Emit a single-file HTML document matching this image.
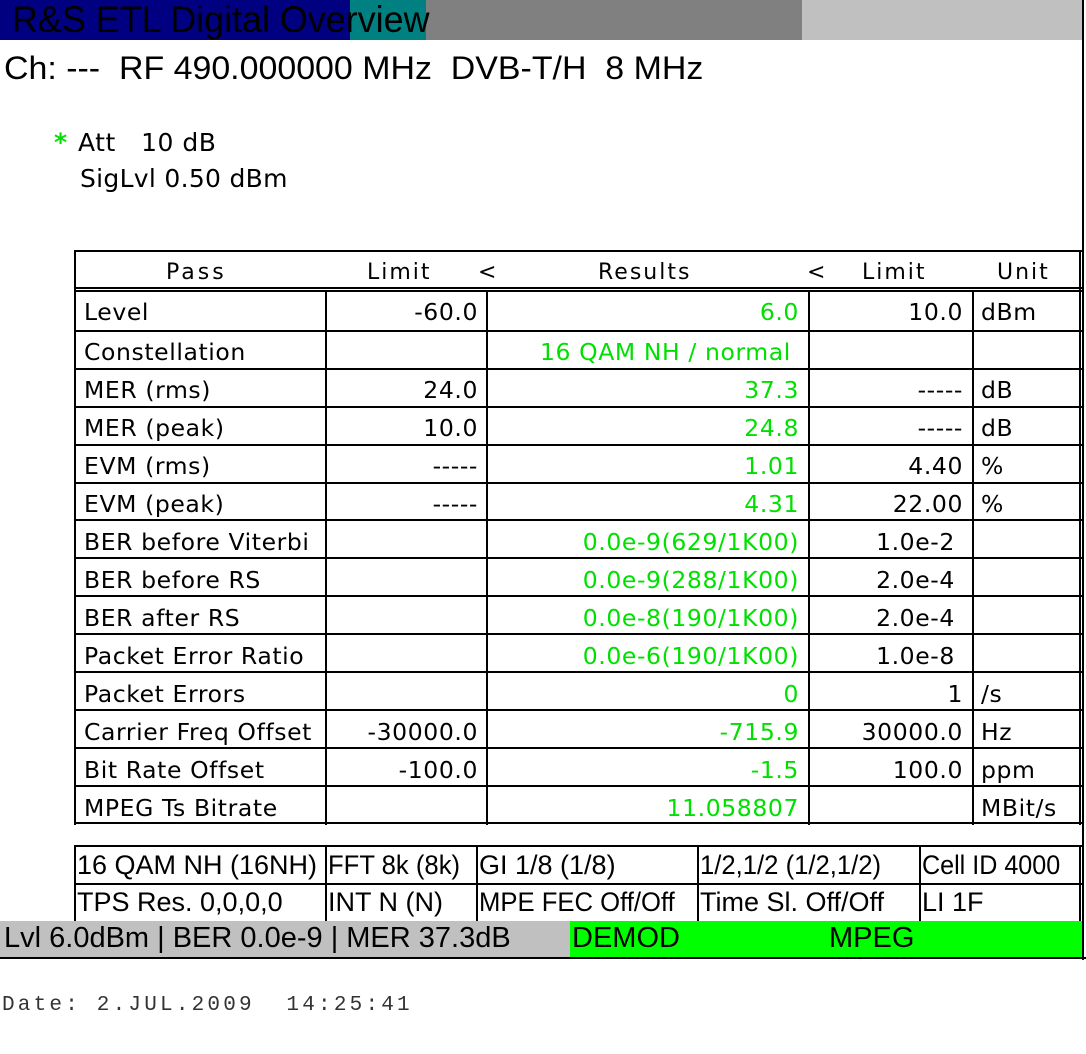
<!DOCTYPE html>
<html><head><meta charset="utf-8"><style>
*{margin:0;padding:0;box-sizing:border-box}
body{width:1086px;height:1054px;background:#fff;position:relative;overflow:hidden;font-family:"DejaVu Sans","Liberation Sans",sans-serif;color:#000}
.a{position:absolute;white-space:nowrap}
.hl{position:absolute;height:2px;background:#000}
.vl{position:absolute;width:2px;background:#000}
.t{position:absolute;font-size:23.5px;line-height:40px;white-space:nowrap;letter-spacing:0.6px}
.h{position:absolute;font-size:22px;line-height:38px;white-space:nowrap}
.r{text-align:right}
.g{color:#00e000}
.b{position:absolute;font-size:27px;line-height:37px;white-space:nowrap;font-family:"Liberation Sans",sans-serif;transform-origin:left center}
</style></head><body>
<div class="a" style="left:0;top:0;width:350px;height:40px;background:#000080"></div>
<div class="a" style="left:350px;top:0;width:76px;height:40px;background:#008080"></div>
<div class="a" style="left:426px;top:0;width:376px;height:40px;background:#808080"></div>
<div class="a" style="left:802px;top:0;width:280px;height:40px;background:#c0c0c0"></div>
<div class="vl" style="left:1082px;top:0;height:960px"></div>
<div class="a" style="left:12px;top:-1px;font-family:'Liberation Sans',sans-serif;font-size:37px;line-height:42px;transform:scaleX(0.97);transform-origin:left">R&amp;S ETL Digital Overview</div>
<div class="a" style="left:4px;top:48px;font-family:'Liberation Sans',sans-serif;font-size:32px;line-height:40px;transform:scaleX(1.06);transform-origin:left">Ch: ---&nbsp; RF 490.000000 MHz&nbsp; DVB-T/H&nbsp; 8 MHz</div>
<div class="a g" style="left:54px;top:126px;font-size:25px;line-height:34px;font-weight:bold">*</div>
<div class="a" style="left:78px;top:126px;font-size:25px;line-height:34px;letter-spacing:0.5px">Att&nbsp;&nbsp; 10 dB</div>
<div class="a" style="left:80px;top:162px;font-size:25px;line-height:34px;letter-spacing:0.3px">SigLvl 0.50 dBm</div>

<div class="hl" style="left:74px;top:250px;width:1008px"></div>
<div class="hl" style="left:74px;top:287px;width:1008px"></div>
<div class="hl" style="left:74px;top:290px;width:1008px"></div>
<div class="vl" style="left:74px;top:250px;height:575px"></div>
<div class="vl" style="left:1079px;top:250px;height:575px"></div>
<div class="vl" style="left:325px;top:290px;height:535px"></div>
<div class="vl" style="left:486px;top:290px;height:535px"></div>
<div class="vl" style="left:808px;top:290px;height:535px"></div>
<div class="vl" style="left:972px;top:290px;height:535px"></div>
<div class="hl" style="left:74px;top:330px;width:1008px"></div>
<div class="hl" style="left:74px;top:368px;width:1008px"></div>
<div class="hl" style="left:74px;top:406px;width:1008px"></div>
<div class="hl" style="left:74px;top:444px;width:1008px"></div>
<div class="hl" style="left:74px;top:482px;width:1008px"></div>
<div class="hl" style="left:74px;top:519px;width:1008px"></div>
<div class="hl" style="left:74px;top:557px;width:1008px"></div>
<div class="hl" style="left:74px;top:595px;width:1008px"></div>
<div class="hl" style="left:74px;top:633px;width:1008px"></div>
<div class="hl" style="left:74px;top:671px;width:1008px"></div>
<div class="hl" style="left:74px;top:709px;width:1008px"></div>
<div class="hl" style="left:74px;top:747px;width:1008px"></div>
<div class="hl" style="left:74px;top:785px;width:1008px"></div>
<div class="hl" style="left:74px;top:822px;width:1008px"></div>

<div class="h" style="left:166px;top:254px;letter-spacing:3px">Pass</div>
<div class="h" style="left:367px;top:254px;letter-spacing:2px">Limit</div>
<div class="h" style="left:478px;top:254px">&lt;</div>
<div class="h" style="left:598px;top:254px;letter-spacing:2px">Results</div>
<div class="h" style="left:807px;top:254px">&lt;</div>
<div class="h" style="left:862px;top:254px;letter-spacing:2px">Limit</div>
<div class="h" style="left:997px;top:254px;letter-spacing:2px">Unit</div>

<div id="rows"></div>
<script>
var rows=[
["Level","-60.0","6.0","10.0","dBm",292],
["Constellation","","16 QAM NH / normal ","","",332],
["MER (rms)","24.0","37.3","-----","dB",370],
["MER (peak)","10.0","24.8","-----","dB",408],
["EVM (rms)","-----","1.01","4.40","%",446],
["EVM (peak)","-----","4.31","22.00","%",484],
["BER before Viterbi","","0.0e-9(629/1K00)","1.0e-2 ","",522],
["BER before RS","","0.0e-9(288/1K00)","2.0e-4 ","",560],
["BER after RS","","0.0e-8(190/1K00)","2.0e-4 ","",598],
["Packet Error Ratio","","0.0e-6(190/1K00)","1.0e-8 ","",636],
["Packet Errors","","0","1","/s",674],
["Carrier Freq Offset","-30000.0","-715.9","30000.0","Hz",712],
["Bit Rate Offset","-100.0","-1.5","100.0","ppm",750],
["MPEG Ts Bitrate","","11.058807","","MBit/s",788]];
var h="";
rows.forEach(function(r){var y=r[5];
h+='<div class="t" style="left:84px;top:'+y+'px">'+r[0]+'</div>';
h+='<div class="t r" style="left:326px;width:152px;top:'+y+'px">'+r[1]+'</div>';
h+='<div class="t r g" style="left:488px;width:311px;top:'+y+'px;white-space:pre">'+r[2]+'</div>';
h+='<div class="t r" style="left:810px;width:153px;top:'+y+'px;white-space:pre">'+r[3]+'</div>';
h+='<div class="t" style="left:981px;top:'+y+'px">'+r[4]+'</div>';});
document.getElementById("rows").outerHTML=h;
</script>

<div class="hl" style="left:74px;top:845px;width:1008px"></div>
<div class="hl" style="left:74px;top:883px;width:1008px"></div>
<div class="vl" style="left:74px;top:845px;height:76px"></div>
<div class="vl" style="left:325px;top:845px;height:76px"></div>
<div class="vl" style="left:476px;top:845px;height:76px"></div>
<div class="vl" style="left:697px;top:845px;height:76px"></div>
<div class="vl" style="left:919px;top:845px;height:76px"></div>
<div class="vl" style="left:1079px;top:845px;height:76px"></div>
<div class="b" style="left:77px;top:847px">16 QAM NH (16NH)</div>
<div class="b" style="left:328px;top:847px;transform:scaleX(0.95)">FFT 8k (8k)</div>
<div class="b" style="left:479px;top:847px">GI 1/8 (1/8)</div>
<div class="b" style="left:700px;top:847px;transform:scaleX(0.95)">1/2,1/2 (1/2,1/2)</div>
<div class="b" style="left:922px;top:847px;transform:scaleX(0.93)">Cell ID 4000</div>
<div class="b" style="left:77px;top:884px">TPS Res. 0,0,0,0</div>
<div class="b" style="left:328px;top:884px">INT N (N)</div>
<div class="b" style="left:479px;top:884px;transform:scaleX(0.95)">MPE FEC Off/Off</div>
<div class="b" style="left:700px;top:884px">Time Sl. Off/Off</div>
<div class="b" style="left:922px;top:884px">LI 1F</div>

<div class="a" style="left:0;top:921px;width:570px;height:36px;background:#c0c0c0"></div>
<div class="a" style="left:570px;top:921px;width:512px;height:36px;background:#00ff00"></div>
<div class="b" style="left:4px;top:920px;font-size:29px">Lvl 6.0dBm | BER 0.0e-9 | MER 37.3dB</div>
<div class="b" style="left:572px;top:920px;font-size:29px">DEMOD</div>
<div class="b" style="left:829px;top:920px;font-size:29px">MPEG</div>
<div class="hl" style="left:0;top:957px;width:1086px;height:2px"></div>

<div class="a" style="left:2px;top:992px;font-family:'Liberation Mono',monospace;font-size:21px;line-height:28px;color:#333;white-space:pre;letter-spacing:3.2px">Date: 2.JUL.2009  14:25:41</div>
</body></html>
